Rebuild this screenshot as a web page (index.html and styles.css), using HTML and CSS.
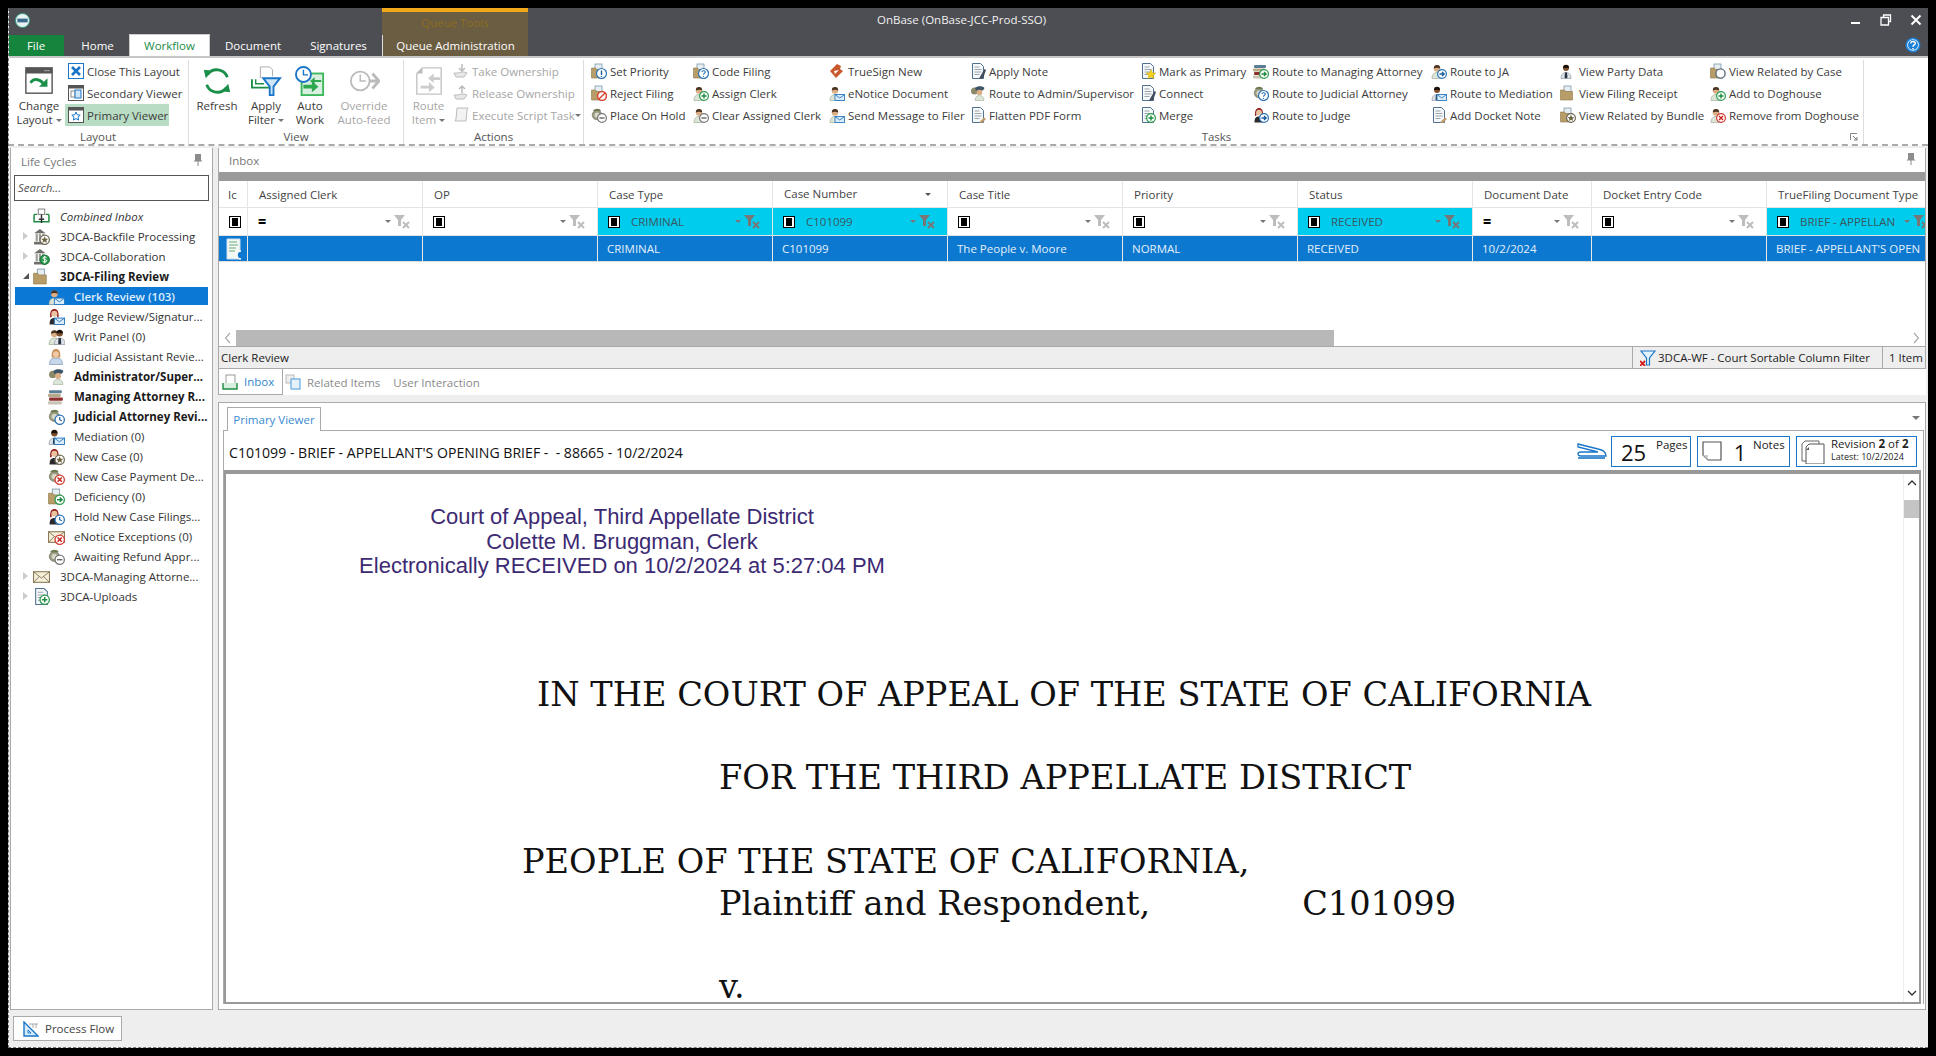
FILE: index.html
```html
<!DOCTYPE html>
<html lang="en">
<head>
<meta charset="utf-8">
<title>OnBase</title>
<link rel="stylesheet" href="styles.css">
</head>
<body>
<svg class="defs" width="0" height="0" aria-hidden="true">
<defs>
<g id="folder"><rect x="4" y="1" width="7" height="6" fill="#e6eef2" stroke="#6d8aa0" stroke-width=".7"/><path d="M.5 5h4l1 1.5h7V15H.5z" fill="#b89d68" stroke="#8d7748" stroke-width=".6"/></g>
<g id="man"><path d="M1 15.500c0-4 2-6 5-6s5 2 5 6z" fill="#dbe6d8" stroke="#93a58e" stroke-width=".6"/><circle cx="6" cy="5.500" r="3.200" fill="#dcae86"/><path d="M2.800 5.500a3.200 3.400 0 0 1 6.400 0c-1.500-.8-3-1-4.500-.6z" fill="#4a3320"/></g>
<g id="mandark"><path d="M1 15.500c0-4 2-6 5-6s5 2 5 6z" fill="#dde4ea" stroke="#889" stroke-width=".6"/><path d="M5 9.500h2l.5 5-1.500 1-1.500-1z" fill="#26323f"/><circle cx="6" cy="5" r="3" fill="#7d4f2d"/><path d="M3 5a3 3.300 0 0 1 6 0z" fill="#1c120a"/></g>
<g id="woman"><path d="M1.500 15.500c0-4 1-6 4.500-6s4.500 2 4.500 6z" fill="#2a2a2e"/><path d="M2 9c-.4-6 1.500-8 4-8s4.500 2 4 8l-1.500-.5v-3h-5v3z" fill="#97211f"/><circle cx="6" cy="5.500" r="2.800" fill="#eac3a0"/></g>
<g id="blonde"><path d="M1.500 15.500c0-4 1-6 6-6s6 2 6 6z" fill="#c6d8ea" stroke="#6f8faf" stroke-width=".6"/><path d="M3.500 9c-.4-6 1.500-8 4-8s4.500 2 4 8z" fill="#c98f58"/><circle cx="7.500" cy="5.800" r="2.800" fill="#f1c9a6"/></g>
<g id="officer"><circle cx="6" cy="8" r="4.800" fill="#9a9a80" stroke="#6e6e5a" stroke-width=".6"/><circle cx="6" cy="8" r="2.600" fill="#d8d8c8"/><path d="M2 4c1.500-3 7-3 8 0z" fill="#6c7a50"/></g>
<g id="admin"><circle cx="4.500" cy="6" r="3.500" fill="#8b8a68"/><path d="M5 3c2-2.500 8-2.500 9.500 0L13 5.500H6z" fill="#3d5566"/><circle cx="9.500" cy="7.500" r="2.800" fill="#dcae86"/><path d="M5 15.500c0-3 1.500-5 4.500-5s4.500 2 4.500 5z" fill="#dbe6d8" stroke="#93a58e" stroke-width=".5"/></g>
<g id="doc"><path d="M2.500 .5h8l3 3v12h-11z" fill="#f6f8fa" stroke="#50708f" stroke-width="1"/><path d="M4.500 4h5M4.500 6.500h7M4.500 9h7M4.500 11.500h5" stroke="#9aa6ae" stroke-width="1"/></g>
<g id="pen"><path d="M9 15.500l5.500-9.500 1.500 1-3 8.500z" fill="#3f4d5c"/></g>
<g id="pentan"><path d="M9 15.500l5-5 2 1.500-4 4z" fill="#c19a6c"/></g>
<g id="env"><rect x=".5" y="3.500" width="15" height="10" fill="#f4eeda" stroke="#8b7a55"/><path d="M.5 3.500L8 9.500l7.500-6M.5 13.500L6 8M15.500 13.500L10 8" fill="none" stroke="#8b7a55" stroke-width=".9"/></g>
<g id="envb"><rect x="6" y="9.500" width="9.500" height="6" fill="#dcecf8" stroke="#2a7ac0" stroke-width=".9"/><path d="M6 9.500l4.750 3.500 4.750-3.500" fill="none" stroke="#2a7ac0" stroke-width=".9"/></g>
<g id="books"><rect x="1" y="2" width="12" height="3" rx="1" fill="#5b7d96"/><rect x="0" y="5.500" width="12" height="3" rx="1" fill="#b6a98c"/><rect x="1" y="9" width="13" height="3" rx="1" fill="#8f2f2f"/><rect x="0" y="12.500" width="13" height="3" rx="1" fill="#c9c4b4"/></g>
<g id="bank"><path d="M1 5L6.500 1 12 5z" fill="#6e6e6a"/><path d="M2.500 5.500h2v7h-2zM5.500 5.500h2v7h-2zM8.500 5.500h2v7h-2z" fill="#9c9c96"/><rect x="1" y="13" width="11" height="2.500" fill="#6e6e6a"/></g>
<g id="b-plus"><circle cx="11" cy="11" r="4.400" fill="#fff" stroke="#2a9a4c" stroke-width="1.200"/><path d="M8.500 11h5M11 8.500v5" stroke="#1d8a40" stroke-width="1.400"/></g>
<g id="b-minus"><circle cx="11" cy="11" r="4.400" fill="#fff" stroke="#777" stroke-width="1.200"/><path d="M8.500 11h5" stroke="#666" stroke-width="1.400"/></g>
<g id="b-x"><circle cx="11" cy="11" r="4.400" fill="#fff" stroke="#d23a32" stroke-width="1.200"/><path d="M9 9l4 4M13 9l-4 4" stroke="#c8281f" stroke-width="1.400"/></g>
<g id="b-no"><circle cx="11" cy="11" r="4.400" fill="#fff" stroke="#d8432e" stroke-width="1.500"/><path d="M8 14l6-6" stroke="#d8432e" stroke-width="1.500"/></g>
<g id="b-go"><circle cx="11" cy="11" r="4.400" fill="#fff" stroke="#2a9a4c" stroke-width="1.200"/><path d="M8.500 11h4M11 9l2.200 2-2.200 2" fill="none" stroke="#1d8a40" stroke-width="1.300"/></g>
<g id="b-blue"><circle cx="11" cy="11" r="4.400" fill="#fff" stroke="#2b73b4" stroke-width="1.200"/><path d="M8.500 11h4M11 9l2.200 2-2.200 2" fill="none" stroke="#1b5f9c" stroke-width="1.300"/></g>
<g id="b-q"><circle cx="10.500" cy="10.500" r="5" fill="#fff" stroke="#2b73b4" stroke-width="1.200"/><path d="M8.800 9c.4-1.800 3.600-1.600 3.400.3-.1 1-1.700 1.100-1.700 2.500M10.500 13v1" fill="none" stroke="#2b73b4" stroke-width="1.100"/></g>
<g id="b-ex"><circle cx="10.500" cy="10.500" r="5" fill="#fff" stroke="#2b73b4" stroke-width="1.200"/><path d="M10.500 7.500v4.500M10.500 13v1" stroke="#1b5f9c" stroke-width="1.400"/></g>
<g id="b-star"><circle cx="11" cy="11" r="4.400" fill="#fff" stroke="#6f6a58" stroke-width="1.200"/><path d="M11 7.800l1 2.200 2.300.2-1.700 1.500.5 2.300-2.100-1.200-2.100 1.200.5-2.300-1.700-1.500 2.300-.2z" fill="#6f6640"/></g>
<g id="b-dollar"><circle cx="11" cy="11" r="4.400" fill="#2a9a4c" stroke="#17763a"/><path d="M12.800 9c-1-1-3.500-.8-3.400.6.100 1.500 3.500.8 3.500 2.500 0 1.300-2.800 1.400-3.800.4M11 7.500v7" fill="none" stroke="#fff" stroke-width=".9"/></g>
<g id="b-clock"><circle cx="11" cy="11" r="4.400" fill="#fff" stroke="#2b73b4" stroke-width="1.200"/><path d="M11 8.500V11l2 1" fill="none" stroke="#1b5f9c" stroke-width="1.100"/></g>
<g id="b-gold"><path d="M11 6.500l1.500 3.200 3.400.4-2.500 2.300.7 3.400-3.100-1.700-3.100 1.700.7-3.400-2.500-2.300 3.400-.4z" fill="#f5d21e" stroke="#b79a10" stroke-width=".4"/></g>
<g id="b-o"><circle cx="10.500" cy="10.500" r="4.600" fill="#fff" stroke="#5a6e7e" stroke-width="1.400"/></g>
</defs>
</svg>

<div class="window">
  <header class="titlebar">
    <div class="caption">
      <svg class="logo" viewBox="0 0 16 16"><circle cx="8" cy="8" r="7.500" fill="#e9f4f2" stroke="#2d9c7e" stroke-width="1"/><rect x="2.500" y="6" width="11" height="4" fill="#3a6a8c"/></svg>
      <div class="ctx-label">Queue Tools</div>
      <div class="app-title">OnBase (OnBase-JCC-Prod-SSO)</div>
      <div class="win-btns">
        <svg class="wb" viewBox="0 0 12 12"><path d="M1 9h9" stroke="#fff" stroke-width="2"/></svg>
        <svg class="wb" viewBox="0 0 12 12"><path d="M3.500 3V1h7v6.500H8.500M1 3.500h7.500V11H1z" fill="none" stroke="#fff" stroke-width="1.300"/></svg>
        <svg class="wb wb-x" viewBox="0 0 12 12"><path d="M1.500 1.500l9 9M10.500 1.500l-9 9" stroke="#fff" stroke-width="2"/></svg>
      </div>
    </div>
    <nav class="tabs">
      <span class="tab tab-file">File</span>
      <span class="tab tab-home">Home</span>
      <span class="tab tab-active">Workflow</span>
      <span class="tab tab-document">Document</span>
      <span class="tab tab-signatures">Signatures</span>
      <span class="tab tab-queue">Queue Administration</span>
      <svg class="help" viewBox="0 0 16 16"><circle cx="8" cy="8" r="7.500" fill="#1a80d8"/><circle cx="8" cy="8" r="5.800" fill="#fff"/><circle cx="8" cy="8" r="5" fill="#1a80d8"/><path d="M5.700 6.300C6 3.800 10.500 4 10.300 6.500 10.200 8 8 8 8 9.700M8 11v1.500" fill="none" stroke="#fff" stroke-width="1.500"/></svg>
    </nav>
  </header>

  <section class="ribbon">
    <div class="group g-layout">
      <div class="group-body">
        <div class="big w-change">
          <svg class="big-ic" viewBox="0 0 32 32"><rect x="2" y="2" width="28" height="27" fill="#fff" stroke="#555" stroke-width="1.500"/><rect x="2" y="2" width="28" height="6" fill="#555"/><path d="M22 5h5" stroke="#fff" stroke-dasharray="1 1"/><path d="M7 18c3-5 9-5 14 1" fill="none" stroke="#1a8f49" stroke-width="3"/><path d="M25 13v9h-9z" fill="#1a8f49"/></svg>
          <span class="big-text">Change<br>Layout <i class="caret"></i></span>
        </div>
        <div class="col">
          <div class="cmd"><svg class="ic" viewBox="0 0 16 16"><rect x=".5" y=".5" width="15" height="15" fill="#fff" stroke="#1a76c8"/><path d="M4 4l8 8M12 4l-8 8" stroke="#1a76c8" stroke-width="2.600"/></svg>Close This Layout</div>
          <div class="cmd"><svg class="ic" viewBox="0 0 16 16"><rect x=".5" y=".5" width="15" height="15" fill="#fff" stroke="#555"/><rect x=".5" y=".5" width="15" height="3" fill="#555"/><rect x="3" y="6" width="4" height="6" fill="none" stroke="#888"/><rect x="7" y="5" width="6" height="8" fill="#cfe6f8" stroke="#1a76c8"/></svg>Secondary Viewer</div>
          <div class="cmd cmd-on"><svg class="ic" viewBox="0 0 16 16"><rect x=".5" y=".5" width="15" height="15" fill="#fff" stroke="#555"/><rect x=".5" y=".5" width="15" height="3" fill="#555"/><path d="M8 5l1.200 2.800 3 .3-2.200 2 .6 3L8 11.600 5.400 13.100l.6-3-2.200-2 3-.3z" fill="none" stroke="#1a76c8"/></svg>Primary Viewer</div>
        </div>
      </div>
      <div class="group-label">Layout</div>
    </div>

    <div class="group g-view">
      <div class="group-body">
        <div class="big w-refresh">
          <svg class="big-ic" viewBox="0 0 32 32"><path d="M27 12A12 12 0 0 0 6 9" fill="none" stroke="#1a8f49" stroke-width="3"/><path d="M2 4l9 1-7 8z" fill="#1a8f49"/><path d="M5 20a12 12 0 0 0 21 3" fill="none" stroke="#1a8f49" stroke-width="3"/><path d="M30 28l-9-1 7-8z" fill="#1a8f49"/></svg>
          <span class="big-text">Refresh</span>
        </div>
        <div class="big w-filter">
          <svg class="big-ic" viewBox="0 0 32 32"><path d="M10 13V1h10l3 3v7" fill="#fff" stroke="#aaa"/><path d="M1 14v9h20" fill="none" stroke="#1a8f49" stroke-width="2"/><path d="M5 14v5h9" fill="none" stroke="#1a8f49" stroke-width="1.500"/><path d="M13 13h18l-7 9v9h-4v-9z" fill="#cfe6f8" stroke="#1a76c8" stroke-width="2"/></svg>
          <span class="big-text">Apply<br>Filter <i class="caret"></i></span>
        </div>
        <div class="big w-auto">
          <svg class="big-ic" viewBox="0 0 32 32"><rect x="7" y="8" width="23" height="23" fill="#d9efdf" stroke="#3cb85c" stroke-width="2"/><path d="M10 22h9v-4l7 6-7 6v-4h-9z" transform="translate(-1 -2)" fill="#2ea84e"/><path d="M28 15h-7v-3l-5 4 5 4v-3h7z" fill="#2ea84e"/><circle cx="9" cy="9" r="8" fill="#fff" stroke="#1a76c8" stroke-width="2"/><path d="M9 4v5.500h5" fill="none" stroke="#1a76c8" stroke-width="1.500"/></svg>
          <span class="big-text">Auto<br>Work</span>
        </div>
        <div class="big w-over off">
          <svg class="big-ic" viewBox="0 0 32 32"><circle cx="12" cy="16" r="10" fill="none" stroke="#bbb" stroke-width="2"/><path d="M12 9v7h6" fill="none" stroke="#bbb" stroke-width="1.600"/><path d="M22 16h9M25 8l7 8-7 8" fill="none" stroke="#bbb" stroke-width="3"/></svg>
          <span class="big-text">Override<br>Auto-feed</span>
        </div>
      </div>
      <div class="group-label">View</div>
    </div>

    <div class="group g-actions">
      <div class="group-body">
        <div class="big w-route off">
          <svg class="big-ic" viewBox="0 0 32 32"><path d="M9 2h20v28H3V8z" fill="#fff" stroke="#c4c4c4" stroke-width="1.500"/><path d="M9 2v6H3z" fill="#bbb"/><path d="M7 21h9v-4l6 6-6 5v-4H7z" fill="#ccc"/><path d="M28 12h-7V8l-6 5 6 5v-3h7z" fill="#ccc"/></svg>
          <span class="big-text">Route<br>Item <i class="caret"></i></span>
        </div>
        <div class="col off">
          <div class="cmd"><svg class="ic" viewBox="0 0 16 16"><path d="M1 10h4l3-1h3l3 1-3 4H3z" fill="#e8e8e8" stroke="#bbb"/><path d="M9 1v7M6 5l3 3 3-3" fill="none" stroke="#bbb" stroke-width="1.500"/></svg>Take Ownership</div>
          <div class="cmd"><svg class="ic" viewBox="0 0 16 16"><path d="M1 10h4l3-1h3l3 1-3 4H3z" fill="#e8e8e8" stroke="#bbb"/><path d="M9 8V1M6 4l3-3 3 3" fill="none" stroke="#bbb" stroke-width="1.500"/></svg>Release Ownership</div>
          <div class="cmd"><svg class="ic" viewBox="0 0 16 16"><path d="M4 1h11l-1 2-1 11H2l1-2z" fill="#f2f2f2" stroke="#bbb"/></svg>Execute Script Task <i class="caret"></i></div>
        </div>
      </div>
      <div class="group-label">Actions</div>
    </div>

    <div class="group g-tasks">
      <div class="group-body tasks-grid">
        <div class="cmd"><svg class="ic" viewBox="0 0 16 16"><use href="#folder"/><use href="#b-ex"/></svg>Set Priority</div>
        <div class="cmd"><svg class="ic" viewBox="0 0 16 16"><use href="#folder"/><use href="#b-q"/></svg>Code Filing</div>
        <div class="cmd"><svg class="ic" viewBox="0 0 16 16"><path d="M1 8l7-7 4 2-1 3 3 2-7 7z" fill="#c9592c"/><path d="M5 8l5-1-4 4z" fill="#fff"/></svg>TrueSign New</div>
        <div class="cmd"><svg class="ic" viewBox="0 0 16 16"><use href="#doc"/><use href="#pen"/></svg>Apply Note</div>
        <div class="cmd"><svg class="ic" viewBox="0 0 16 16"><use href="#doc"/><use href="#b-gold"/></svg>Mark as Primary</div>
        <div class="cmd"><svg class="ic" viewBox="0 0 16 16"><use href="#books"/><use href="#b-go"/></svg>Route to Managing Attorney</div>
        <div class="cmd"><svg class="ic" viewBox="0 0 16 16"><use href="#man"/><use href="#b-blue"/></svg>Route to JA</div>
        <div class="cmd"><svg class="ic" viewBox="0 0 16 16"><use href="#mandark"/></svg>View Party Data</div>
        <div class="cmd"><svg class="ic" viewBox="0 0 16 16"><use href="#folder"/><use href="#b-o"/></svg>View Related by Case</div>

        <div class="cmd"><svg class="ic" viewBox="0 0 16 16"><use href="#folder"/><use href="#b-no"/></svg>Reject Filing</div>
        <div class="cmd"><svg class="ic" viewBox="0 0 16 16"><use href="#man"/><use href="#b-plus"/></svg>Assign Clerk</div>
        <div class="cmd"><svg class="ic" viewBox="0 0 16 16"><use href="#man"/><use href="#envb"/></svg>eNotice Document</div>
        <div class="cmd"><svg class="ic" viewBox="0 0 16 16"><use href="#admin"/></svg>Route to Admin/Supervisor</div>
        <div class="cmd"><svg class="ic" viewBox="0 0 16 16"><use href="#doc"/><use href="#pen"/></svg>Connect</div>
        <div class="cmd"><svg class="ic" viewBox="0 0 16 16"><use href="#officer"/><use href="#b-q"/></svg>Route to Judicial Attorney</div>
        <div class="cmd"><svg class="ic" viewBox="0 0 16 16"><use href="#mandark"/><use href="#envb"/></svg>Route to Mediation</div>
        <div class="cmd"><svg class="ic" viewBox="0 0 16 16"><use href="#folder"/></svg>View Filing Receipt</div>
        <div class="cmd"><svg class="ic" viewBox="0 0 16 16"><use href="#man"/><use href="#b-plus"/></svg>Add to Doghouse</div>

        <div class="cmd"><svg class="ic" viewBox="0 0 16 16"><use href="#officer"/><use href="#b-minus"/></svg>Place On Hold</div>
        <div class="cmd"><svg class="ic" viewBox="0 0 16 16"><use href="#man"/><use href="#b-minus"/></svg>Clear Assigned Clerk</div>
        <div class="cmd"><svg class="ic" viewBox="0 0 16 16"><use href="#man"/><use href="#envb"/></svg>Send Message to Filer</div>
        <div class="cmd"><svg class="ic" viewBox="0 0 16 16"><use href="#doc"/><use href="#pentan"/></svg>Flatten PDF Form</div>
        <div class="cmd"><svg class="ic" viewBox="0 0 16 16"><use href="#doc"/><use href="#b-plus"/></svg>Merge</div>
        <div class="cmd"><svg class="ic" viewBox="0 0 16 16"><use href="#woman"/><use href="#b-blue"/></svg>Route to Judge</div>
        <div class="cmd"><svg class="ic" viewBox="0 0 16 16"><use href="#doc"/><use href="#pentan"/></svg>Add Docket Note</div>
        <div class="cmd"><svg class="ic" viewBox="0 0 16 16"><use href="#folder"/><use href="#b-star"/></svg>View Related by Bundle</div>
        <div class="cmd"><svg class="ic" viewBox="0 0 16 16"><use href="#man"/><use href="#b-x"/></svg>Remove from Doghouse</div>
      </div>
      <div class="group-label tasks-label">Tasks<svg class="launcher" viewBox="0 0 8 8"><path d="M.5 7V.5H7" fill="none" stroke="#888"/><path d="M3 3l4 4M7 4v3H4" fill="none" stroke="#777"/></svg></div>
    </div>
  </section>

  <main class="workspace">
    <aside class="lifecycles">
      <div class="pane-head"><span>Life Cycles</span><svg class="pin" viewBox="0 0 10 12"><path d="M2 0h6v6l1.500 1.500h-9L2 6zM4.500 7.500h1V12h-1z" fill="#8c8c8c"/></svg></div>
      <div class="search">Search...</div>
      <ul class="tree">
        <li class="node top italic"><i class="tw"></i><svg class="tic" viewBox="0 0 16 16"><rect x="5" y="1" width="6" height="5" fill="#fff" stroke="#888"/><path d="M1 6v7h14V6M1 6h3M12 6h3" fill="none" stroke="#1f8a42" stroke-width="1.400"/><path d="M8 6v8M5.500 10.500h5" stroke="#333" stroke-width="1.400"/></svg>Combined Inbox</li>
        <li class="node top"><i class="tw tw-c"></i><svg class="tic" viewBox="0 0 16 16"><use href="#bank"/><use href="#b-star"/></svg>3DCA-Backfile Processing</li>
        <li class="node top"><i class="tw tw-c"></i><svg class="tic" viewBox="0 0 16 16"><use href="#bank"/><use href="#b-dollar"/></svg>3DCA-Collaboration</li>
        <li class="node top bold"><i class="tw tw-o"></i><svg class="tic" viewBox="0 0 16 16"><use href="#folder"/></svg>3DCA-Filing Review</li>
        <li class="node child sel"><svg class="tic" viewBox="0 0 16 16"><use href="#man"/><use href="#envb"/></svg>Clerk Review (103)</li>
        <li class="node child"><svg class="tic" viewBox="0 0 16 16"><use href="#woman"/><use href="#envb"/></svg>Judge Review/Signatur...</li>
        <li class="node child"><svg class="tic" viewBox="0 0 16 16"><use href="#man"/><g transform="translate(5 0)"><use href="#mandark"/></g></svg>Writ Panel (0)</li>
        <li class="node child"><svg class="tic" viewBox="0 0 16 16"><use href="#blonde"/></svg>Judicial Assistant Revie...</li>
        <li class="node child bold"><svg class="tic" viewBox="0 0 16 16"><use href="#admin"/></svg>Administrator/Super...</li>
        <li class="node child bold"><svg class="tic" viewBox="0 0 16 16"><use href="#books"/></svg>Managing Attorney R...</li>
        <li class="node child bold"><svg class="tic" viewBox="0 0 16 16"><use href="#officer"/><use href="#b-clock"/></svg>Judicial Attorney Revi...</li>
        <li class="node child"><svg class="tic" viewBox="0 0 16 16"><use href="#mandark"/><use href="#envb"/></svg>Mediation (0)</li>
        <li class="node child"><svg class="tic" viewBox="0 0 16 16"><use href="#woman"/><use href="#b-star"/></svg>New Case (0)</li>
        <li class="node child"><svg class="tic" viewBox="0 0 16 16"><use href="#officer"/><use href="#b-x"/></svg>New Case Payment De...</li>
        <li class="node child"><svg class="tic" viewBox="0 0 16 16"><use href="#folder"/><use href="#b-go"/></svg>Deficiency (0)</li>
        <li class="node child"><svg class="tic" viewBox="0 0 16 16"><use href="#woman"/><use href="#b-clock"/></svg>Hold New Case Filings...</li>
        <li class="node child"><svg class="tic" viewBox="0 0 16 16"><use href="#env"/><use href="#b-x"/></svg>eNotice Exceptions (0)</li>
        <li class="node child"><svg class="tic" viewBox="0 0 16 16"><use href="#officer"/><use href="#b-minus"/></svg>Awaiting Refund Appr...</li>
        <li class="node top"><i class="tw tw-c"></i><svg class="tic" viewBox="0 0 16 16"><use href="#env"/></svg>3DCA-Managing Attorne...</li>
        <li class="node top"><i class="tw tw-c"></i><svg class="tic" viewBox="0 0 16 16"><use href="#doc"/><use href="#b-plus"/></svg>3DCA-Uploads</li>
      </ul>
    </aside>

    <div class="right">
      <section class="inbox">
        <div class="pane-head inbox-head"><span>Inbox</span><svg class="pin" viewBox="0 0 10 12"><path d="M2 0h6v6l1.500 1.500h-9L2 6zM4.500 7.500h1V12h-1z" fill="#8c8c8c"/></svg></div>
        <div class="group-bar"></div>
        <div class="grid-wrap">
          <div class="grid">
            <div class="th">Ic</div><div class="th pad">Assigned Clerk</div><div class="th pad">OP</div><div class="th pad">Case Type</div>
            <div class="th pad sorted">Case Number<i class="caret dark"></i></div><div class="th pad">Case Title</div><div class="th pad">Priority</div><div class="th pad">Status</div>
            <div class="th pad">Document Date</div><div class="th pad">Docket Entry Code</div><div class="th pad">TrueFiling Document Type</div>

            <div class="fc fc-ic"><i class="chk"></i></div>
            <div class="fc"><b class="eq">=</b><span class="fval"></span><i class="caret"></i><svg class="fx" viewBox="0 0 16 14"><path d="M0 0h11L7 5v6H4V5z" fill="#bdbdbd"/><path d="M9 7l6 6M15 7l-6 6" stroke="#bdbdbd" stroke-width="2"/></svg></div>
            <div class="fc"><i class="chk"></i><span class="fval"></span><i class="caret"></i><svg class="fx" viewBox="0 0 16 14"><path d="M0 0h11L7 5v6H4V5z" fill="#bdbdbd"/><path d="M9 7l6 6M15 7l-6 6" stroke="#bdbdbd" stroke-width="2"/></svg></div>
            <div class="fc on"><i class="chk"></i><span class="fval">CRIMINAL</span><i class="caret"></i><svg class="fx" viewBox="0 0 16 14"><path d="M0 0h11L7 5v6H4V5z" fill="#777"/><path d="M9 7l6 6M15 7l-6 6" stroke="#777" stroke-width="2"/></svg></div>
            <div class="fc on"><i class="chk"></i><span class="fval">C101099</span><i class="caret"></i><svg class="fx" viewBox="0 0 16 14"><path d="M0 0h11L7 5v6H4V5z" fill="#777"/><path d="M9 7l6 6M15 7l-6 6" stroke="#777" stroke-width="2"/></svg></div>
            <div class="fc"><i class="chk"></i><span class="fval"></span><i class="caret"></i><svg class="fx" viewBox="0 0 16 14"><path d="M0 0h11L7 5v6H4V5z" fill="#bdbdbd"/><path d="M9 7l6 6M15 7l-6 6" stroke="#bdbdbd" stroke-width="2"/></svg></div>
            <div class="fc"><i class="chk"></i><span class="fval"></span><i class="caret"></i><svg class="fx" viewBox="0 0 16 14"><path d="M0 0h11L7 5v6H4V5z" fill="#bdbdbd"/><path d="M9 7l6 6M15 7l-6 6" stroke="#bdbdbd" stroke-width="2"/></svg></div>
            <div class="fc on"><i class="chk"></i><span class="fval">RECEIVED</span><i class="caret"></i><svg class="fx" viewBox="0 0 16 14"><path d="M0 0h11L7 5v6H4V5z" fill="#777"/><path d="M9 7l6 6M15 7l-6 6" stroke="#777" stroke-width="2"/></svg></div>
            <div class="fc"><b class="eq">=</b><span class="fval"></span><i class="caret"></i><svg class="fx" viewBox="0 0 16 14"><path d="M0 0h11L7 5v6H4V5z" fill="#bdbdbd"/><path d="M9 7l6 6M15 7l-6 6" stroke="#bdbdbd" stroke-width="2"/></svg></div>
            <div class="fc"><i class="chk"></i><span class="fval"></span><i class="caret"></i><svg class="fx" viewBox="0 0 16 14"><path d="M0 0h11L7 5v6H4V5z" fill="#bdbdbd"/><path d="M9 7l6 6M15 7l-6 6" stroke="#bdbdbd" stroke-width="2"/></svg></div>
            <div class="fc on"><i class="chk"></i><span class="fval">BRIEF - APPELLAN</span><i class="caret"></i><svg class="fx" viewBox="0 0 16 14"><path d="M0 0h11L7 5v6H4V5z" fill="#777"/><path d="M9 7l6 6M15 7l-6 6" stroke="#777" stroke-width="2"/></svg></div>

            <div class="td td-ic"><svg class="ic" viewBox="0 0 16 22"><path d="M1 1h13v20H1z" fill="#f4f8f4" stroke="#cde"/><path d="M3 4h8M3 7h9M3 10h7M3 13h6" stroke="#6ca87a"/><path d="M15 13a4 4 0 0 0-4 4 4 4 0 0 0 4 4" fill="#0c78d0" stroke="#fff" stroke-width="1.500"/></svg></div>
            <div class="td"></div><div class="td"></div><div class="td">CRIMINAL</div><div class="td">C101099</div><div class="td">The People v. Moore</div><div class="td">NORMAL</div><div class="td">RECEIVED</div><div class="td">10/2/2024</div><div class="td"></div><div class="td">BRIEF - APPELLANT'S OPEN</div>
          </div>
        </div>
        <div class="hscroll"><svg class="sarrow" viewBox="0 0 8 12"><path d="M6 1L1.500 6 6 11" fill="none" stroke="#aaa" stroke-width="1.200"/></svg><div class="hthumb"></div><svg class="sarrow sarrow-r" viewBox="0 0 8 12"><path d="M2 1l4.500 5L2 11" fill="none" stroke="#aaa" stroke-width="1.200"/></svg></div>
        <div class="status">
          <span class="status-name">Clerk Review</span>
          <span class="status-filter"><svg class="ic" viewBox="0 0 16 16"><path d="M1 1h14L9.500 8v7h-3V8z" fill="#e3f1fb" stroke="#1a76c8" stroke-width="1.200"/><path d="M0 11l5 5M5 11l-5 5" stroke="#d82020" stroke-width="1.800"/></svg>3DCA-WF - Court Sortable Column Filter</span>
          <span class="status-count">1 Item</span>
        </div>
      </section>
      <div class="subtabs">
        <span class="subtab sub-on"><svg class="ic" viewBox="0 0 16 16"><rect x="4" y="1" width="9" height="9" fill="#fff" stroke="#999"/><path d="M1 9v6h14V9" fill="#d8efdd" stroke="#1f8a42" stroke-width="1.400"/></svg>Inbox</span>
        <span class="subtab"><svg class="ic" viewBox="0 0 16 16"><rect x="1" y="1" width="8" height="8" fill="#eee" stroke="#bbb"/><rect x="6" y="5" width="9" height="10" fill="#e6f2fb" stroke="#4a9ad8"/></svg>Related Items</span>
        <span class="subtab">User Interaction</span>
      </div>

      <section class="viewer">
        <div class="viewer-tabs"><span class="vtab">Primary Viewer</span><i class="caret vcaret"></i></div>
        <div class="viewer-box">
          <div class="doc-head">
            <span class="doc-name">C101099 - BRIEF - APPELLANT'S OPENING BRIEF - &nbsp;- 88665 - 10/2/2024</span>
            <svg class="stapler" viewBox="0 0 30 20"><path d="M1 3l20 5c5 1 8 3 8 7H4c-2 0-3-1-3-2s1-2 3-2h17L1 6z" fill="#fff" stroke="#1a76c8" stroke-width="1.300"/><path d="M1 17h27" stroke="#1a76c8" stroke-width="1.600"/></svg>
            <div class="info info-pages"><span class="num">25</span><span class="info-lab">Pages</span></div>
            <div class="info info-notes"><svg class="note-ic" viewBox="0 0 20 20"><path d="M1 1h18v18H6l-5-5z" fill="#fff" stroke="#555" stroke-width="1.200"/><path d="M6 14v5l-5-5z" fill="#ccc"/></svg><span class="num num-1">1</span><span class="info-lab">Notes</span></div>
            <div class="info info-rev"><svg class="rev-ic" viewBox="0 0 24 24"><path d="M4 1h14v20H1V4z" fill="#fff" stroke="#666"/><path d="M8 4h15v20H5V7z" fill="#fff" stroke="#555"/><path d="M8 7v3H5z" fill="#555"/></svg><div class="rev-text"><div>Revision <b>2</b> of <b>2</b></div><small>Latest: 10/2/2024</small></div></div>
          </div>
          <div class="doc-frame">
            <div class="page">
              <div class="stamp">Court of Appeal, Third Appellate District<br>Colette M. Bruggman, Clerk<br>Electronically RECEIVED on 10/2/2024 at 5:27:04 PM</div>
              <div class="l l-court">IN THE COURT OF APPEAL OF THE STATE OF CALIFORNIA</div>
              <div class="l l-third">FOR THE THIRD APPELLATE DISTRICT</div>
              <div class="l l-people">PEOPLE OF THE STATE OF CALIFORNIA,</div>
              <div class="l l-plain"><span>Plaintiff and Respondent,</span><span class="case-no">C101099</span></div>
              <div class="l l-v">v.</div>
            </div>
            <div class="vscroll">
              <div class="vbtn"><svg viewBox="0 0 10 6"><path d="M1 5l4-4 4 4" fill="none" stroke="#333" stroke-width="1.300"/></svg></div>
              <div class="vthumb"></div>
              <div class="vbtn vbtn-d"><svg viewBox="0 0 10 6"><path d="M1 1l4 4 4-4" fill="none" stroke="#333" stroke-width="1.300"/></svg></div>
            </div>
          </div>
        </div>
      </section>
    </div>
  </main>

  <footer class="footer">
    <div class="pf-btn"><svg class="pf-ic" viewBox="0 0 16 16"><path d="M1 1l14 14H1z" fill="#d7ecfa" stroke="#1a76c8" stroke-width="1.400"/><path d="M5 9v3h3z" fill="#fff" stroke="#1a76c8"/><path d="M6 3h9M10 3v4M13 3v4" stroke="#aaa"/></svg>Process Flow</div>
  </footer>
</div>
</body>
</html>
```
FILE: styles.css
```css
* { box-sizing: border-box; }
html, body { margin: 0; height: 100%; overflow: hidden; }
body { background: #000; padding: 8px; font-family: "Open Sans", "Noto Sans", sans-serif; font-size: 11.5px; color: #333; }
.defs { display: block; height: 0; }
.window { width: 1920px; height: 1040px; background: #eee; display: flex; flex-direction: column; overflow: hidden; border-left: 1px dashed #777; border-bottom: 1px dashed #777; }

/* title bar */
.titlebar { height: 48px; background: #4d4e53; flex: none; margin-left: -1px; }
.caption { height: 27px; display: flex; color: #fff; }
.logo { width: 15px; height: 15px; margin: 5px 0 0 7px; flex: none; }
.ctx-label { width: 146px; margin-left: 352px; background: #6b5d42; border-top: 4px solid #f0a818; color: #8a6d20; text-align: center; line-height: 21px; font-size: 11.5px; }
.app-title { margin-left: 349px; width: 400px; line-height: 24px; font-size: 11.5px; color: #f0f0f0; }
.win-btns { margin-left: auto; display: flex; gap: 18px; padding: 6px 6px 0 0; }
.wb { width: 12px; height: 12px; }
.tabs { height: 21px; display: flex; align-items: stretch; color: #fff; line-height: 21px; font-size: 11.5px; }
.tab { text-align: center; }
.tab-file { width: 56px; background: #15843c; }
.tab-home { width: 65px; padding-left: 2px; }
.tab-active { width: 81px; background: #fff; color: #1b8b4a; border: 1px solid #ccc; border-bottom: 0; margin-top: -1px; line-height: 22px; height: 22px; }
.tab-document { width: 86px; }
.tab-signatures { width: 85px; }
.tab-queue { width: 146px; margin-left: 1px; background: #6b5d42; border-left: 1px solid #ddd; }
.help { width: 16px; height: 16px; margin: 2px 7px 0 auto; }

/* ribbon */
.ribbon { height: 90px; flex: none; background: #fff; display: flex; border-top: 2px solid #c8c8c8; border-bottom: 2px dashed #aaa; margin-left: -1px; }
.group { display: flex; flex-direction: column; border-right: 1px solid #ddd; margin-top: 2px; }
.group-body { flex: 1; display: flex; min-height: 0; }
.group-label { height: 15px; line-height: 15px; text-align: center; color: #555; font-size: 11.5px; }
.g-layout { width: 181px; }
.g-layout .group-body { padding-left: 5px; }
.g-view { width: 215px; }
.g-view .group-body { padding-left: 2px; }
.g-actions { width: 180px; }
.g-actions .group-body { padding-left: 3px; }
.g-tasks { width: 1280px; }
.g-tasks .group-body { padding-left: 4px; }
.big { display: flex; flex-direction: column; align-items: center; text-align: center; line-height: 13.5px; color: #3c3c3c; white-space: nowrap; padding-top: 5.5px; }
.big-ic { width: 32px; height: 30px; margin: 0 0 3.5px; flex: none; }
.big-text { display: block; }
.w-change { width: 52px; }
.w-refresh { width: 52px; }
.w-filter { width: 46px; }
.w-auto { width: 42px; }
.w-over { width: 66px; }
.w-route { width: 43px; }
.off, .off .cmd { color: #a6a6a6; }
.col { display: grid; grid-template-rows: repeat(3, 22px); padding-left: 0; align-content: start; }
.cmd { display: flex; align-items: center; white-space: nowrap; color: #3c3c3c; height: 22px; padding-left: 3px; }
.cmd-on { background: #b9dcc5; width: 104px; }
.ic { width: 16px; height: 16px; margin-right: 3px; flex: none; }
.tasks-grid { display: grid; grid-auto-flow: row; grid-template-columns: 102px 136px 141px 170px 113px 178px 129px 150px 153px; grid-template-rows: repeat(3, 22px); align-content: start; }
.tasks-label { position: relative; padding-right: 14px; }
.launcher { width: 8px; height: 8px; position: absolute; right: 5px; top: 4px; }
.caret { display: inline-block; width: 0; height: 0; border-left: 3px solid transparent; border-right: 3px solid transparent; border-top: 3px solid #777; vertical-align: middle; }

/* main */
.workspace { flex: 1; display: flex; min-height: 0; padding: 1px 2px 0 1px; gap: 5px; margin-top: 1px; }
.lifecycles { width: 203px; flex: none; background: #fff; border: 1px solid #aaa; border-top: 0; display: flex; flex-direction: column; }
.pane-head { display: flex; justify-content: space-between; align-items: center; padding: 0 9px 0 10px; height: 27px; color: #777; flex: none; }
.pin { width: 10px; height: 12px; margin-top: -3px; }
.search { height: 26px; margin: 0 3px; border: 1px solid #555; padding-left: 3px; line-height: 24px; font-style: italic; color: #555; flex: none; }
.tree { list-style: none; margin: 0; padding: 6px 0 0; }
.node { height: 18px; margin: 0 4px 2px; display: flex; align-items: center; white-space: nowrap; color: #333; font-size: 11.5px; }
.top { padding-left: 8px; }
.child { padding-left: 33px; }
.tw { width: 7px; height: 7px; margin-right: 3px; flex: none; }
.tw-c { border-left: 5px solid #ccc; border-top: 4px solid transparent; border-bottom: 4px solid transparent; height: 0; width: 0; margin-right: 5px; }
.tw-o { border-right: 6px solid #555; border-top: 6px solid transparent; height: 0; width: 0; margin-right: 4px; }
.tic { width: 17px; height: 17px; margin-right: 10px; flex: none; }
.child .tic { margin-right: 9px; }
.italic { font-style: italic; }
.bold { font-weight: 700; color: #1a1a1a; }
.sel { background: #0c78d6; color: #dfeefb; font-weight: 600; }

.right { flex: 1; min-width: 0; display: flex; flex-direction: column; }
.inbox { height: 222px; flex: none; background: #fff; border: 1px solid #aaa; border-top: 0; display: flex; flex-direction: column; }
.inbox-head { height: 24px; padding-left: 10px; }
.group-bar { height: 9px; background: #9a9a9a; flex: none; }
.grid-wrap { flex: 1; overflow: hidden; min-height: 0; }
.grid { display: grid; width: 1760px; grid-template-columns: 29px repeat(7, 175px) 119px 175px 175px; grid-template-rows: 27px 28px 26px; }
.th { line-height: 28px; border-right: 1px solid #e4e4e4; border-bottom: 1px solid #e4e4e4; color: #444; white-space: nowrap; overflow: hidden; padding-left: 9px; }
.pad { padding-left: 11px; }
.sorted { display: flex; align-items: center; justify-content: space-between; padding-right: 16px; }
.dark { border-top-color: #555; }
.fc { display: flex; align-items: center; padding: 0 12px 0 10px; border-right: 1px solid #e4e4e4; border-bottom: 1px solid #e4e4e4; background: #fff; color: #555; white-space: nowrap; overflow: hidden; }
.fc-ic { padding-left: 10px; }
.fc.on { background: #00cdee; color: #3d5560; }
.fc:last-child { padding-right: 0; }
.chk { width: 12px; height: 12px; border: 1px solid #000; background: radial-gradient(#000 0 0) center / 6px 8px no-repeat, #fff; flex: none; box-shadow: inset 0 0 0 1px #fff; }
.eq { font-weight: 800; width: 12px; font-size: 14px; color: #000; flex: none; }
.fval { flex: 1; padding-left: 11px; min-width: 0; overflow: hidden; }
.fx { width: 16px; height: 14px; margin-left: 3px; flex: none; }
.td { background: #0c78d0; color: #e3f0fa; border-right: 1px solid #e8e8e8; padding-left: 9px; line-height: 26px; white-space: nowrap; overflow: hidden; border-bottom: 1px solid #ddd; }
.td-ic { padding: 2px 0 0 7px; line-height: 0; }
.td-ic .ic { height: 22px; }
.hscroll { height: 18px; flex: none; display: flex; align-items: center; border-bottom: 1px solid #aaa; padding-left: 5px; padding-right: 5px; }
.sarrow { width: 8px; height: 12px; flex: none; }
.hthumb { width: 1098px; height: 16px; background: #b8b8b8; margin-left: 4px; }
.sarrow-r { margin-left: auto; }
.status { height: 22px; flex: none; background: #eee; display: flex; align-items: center; color: #222; border-bottom: 1px solid #aaa; }
.status-name { flex: 1; padding-left: 2px; }
.status-filter { width: 250px; height: 100%; display: flex; align-items: center; border-left: 1px solid #aaa; padding-left: 7px; }
.status-filter .ic { margin-right: 2px; }
.status-count { width: 43px; height: 100%; border-left: 1px solid #aaa; padding-left: 6px; line-height: 21px; }
.subtabs { height: 26px; flex: none; background: #fff; display: flex; align-items: stretch; color: #8a8a8a; margin-bottom: 7px; border-left: 1px solid #aaa; margin-top: -1px; }
.subtab { display: flex; align-items: center; padding: 0 11px 0 2px; }
.subtab .ic { margin-right: 6px; }
.sub-on { width: 64px; color: #2f86d0; border-right: 1px solid #aaa; border-bottom: 1px solid #aaa; padding-left: 3px; }
.viewer { flex: 1; min-height: 0; background: #fff; border: 1px solid #aaa; display: flex; flex-direction: column; padding: 0 1px 5px 4px; }
.viewer-tabs { height: 27px; display: flex; align-items: flex-end; flex: none; }
.vtab { width: 94px; height: 24px; margin-left: 4px; border: 1px solid #aaa; border-bottom: 0; color: #3a8ad0; text-align: center; line-height: 23px; background: #fff; margin-bottom: -1px; position: relative; }
.vcaret { margin: 0 4px 10px auto; border-left-width: 4px; border-right-width: 4px; border-top-width: 4px; }
.viewer-box { flex: 1; min-height: 0; border: 1px solid #aaa; border-bottom: 0; display: flex; flex-direction: column; }
.doc-head { height: 39px; flex: none; display: flex; align-items: center; padding: 0 6px 0 5px; }
.doc-name { flex: 1; color: #111; font-size: 14.1px; margin-top: 4px; }
.stapler { width: 30px; height: 20px; margin-right: 4px; flex: none; }
.info { height: 31px; border: 1px solid #1a76c8; display: flex; color: #222; flex: none; margin-top: 1px; }
.info-pages { width: 80px; margin-right: 6px; padding-left: 9px; }
.info-notes { width: 93px; margin-right: 6px; padding-left: 4px; }
.info-rev { width: 121px; padding-left: 4px; }
.num { font-size: 22px; line-height: 30px; color: #111; width: 32px; }
.num-1 { width: 28px; text-align: center; padding-left: 8px; }
.info-lab { font-size: 11.5px; line-height: 15px; margin-left: 3px; }
.note-ic { width: 20px; height: 20px; margin-top: 4px; flex: none; }
.rev-ic { width: 24px; height: 24px; margin-top: 3px; flex: none; }
.rev-text { padding-left: 6px; font-size: 11.5px; line-height: 14px; white-space: nowrap; }
.rev-text small { font-size: 9px; display: block; line-height: 12px; }
.doc-frame { flex: 1; min-height: 0; display: flex; border-top: 4px solid #999; border-left: 2px solid #999; border-right: 2px solid #999; border-bottom: 2px solid #999; overflow: hidden; margin: 0 2px 0 0; }
.page { flex: 1; min-width: 0; overflow: hidden; padding-top: 31px; background: #fff; }
.stamp { width: 792px; text-align: center; font-family: "Liberation Sans", sans-serif; font-size: 22px; line-height: 24.5px; color: #3c2a72; }
.l { font-family: "DejaVu Serif", "Liberation Serif", serif; font-size: 33.6px; line-height: 42px; color: #111; white-space: nowrap; }
.l-court { margin: 95px 0 0 311px; }
.l-third { margin: 41px 0 0 493px; }
.l-people { margin: 42px 0 0 296px; }
.l-plain { margin: 0 0 0 493px; display: flex; }
.case-no { margin-left: 152px; }
.l-v { margin: 49px 0 0 493px; line-height: 26px; }
.vscroll { width: 16px; flex: none; background: #fff; display: flex; flex-direction: column; border-left: 1px solid #eee; }
.vbtn { height: 18px; padding: 6px 3px 0; flex: none; }
.vbtn svg { display: block; width: 10px; height: 6px; }
.vthumb { height: 18px; background: #c4c4c4; margin-top: 8px; flex: none; }
.vbtn-d { margin-top: auto; }
.footer { height: 37px; flex: none; padding: 6px 0 0 4px; }
.pf-btn { width: 109px; height: 25px; background: #fff; border: 1px solid #aaa; display: flex; align-items: center; padding-left: 9px; color: #444; }
.pf-ic { width: 16px; height: 16px; margin-right: 6px; }
```
